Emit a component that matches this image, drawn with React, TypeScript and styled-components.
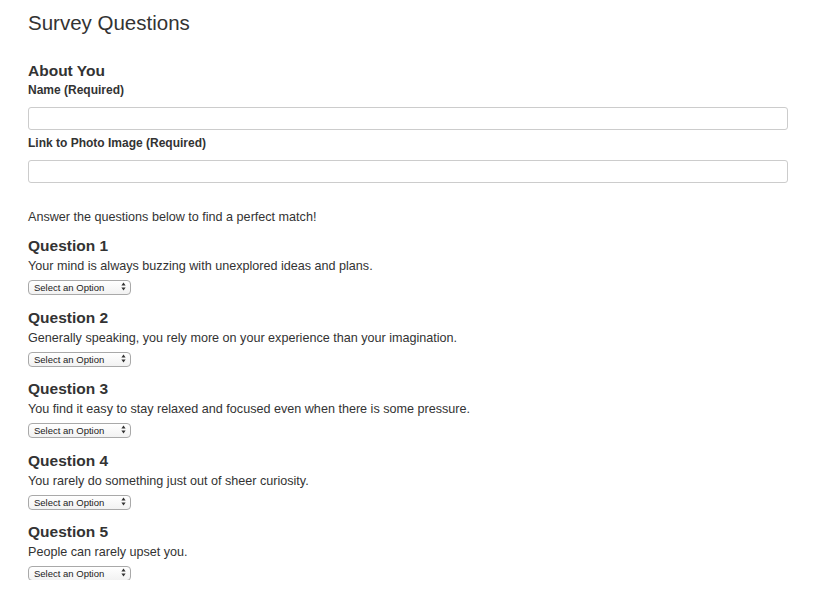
import * as React from 'react';
import styled, { createGlobalStyle } from 'styled-components';

const GlobalStyle = createGlobalStyle`
  html, body {
    margin: 0;
    padding: 0;
    background: #fff;
  }
  body {
    font-family: 'Liberation Sans', Arial, Helvetica, sans-serif;
    font-size: 12px;
    line-height: 17px;
    color: #333;
  }
  * {
    box-sizing: border-box;
  }
`;

const Container = styled.div`
  padding: 0 25px 0 28px;
`;

const Title = styled.h3`
  margin: 12px 0 0;
  font-size: 20.5px;
  font-weight: 500;
  line-height: 1.1;
`;

const SectionTitle = styled.h4<{ $top: number }>`
  margin: ${(p) => p.$top}px 0 0;
  font-size: 15.5px;
  font-weight: 700;
  line-height: 17px;
`;

const Label = styled.label<{ $top: number }>`
  display: block;
  margin-top: ${(p) => p.$top}px;
  font-weight: 700;
  font-size: 12px;
`;

const TextInput = styled.input`
  display: block;
  width: 100%;
  height: 23px;
  margin-top: 8px;
  padding: 0 8px;
  border: 1px solid #ccc;
  border-radius: 3px;
  font: inherit;
  color: #555;
  outline: none;
`;

const Intro = styled.p`
  margin: 26px 0 0;
  font-size: 12.6px;
`;

const Question = styled.div`
  display: flex;
  flex-direction: column;
  align-items: flex-start;
  margin-top: 11px;

  & + & {
    margin-top: 14.5px;
  }
`;

const QuestionText = styled.p`
  margin: 4px 0 0;
  font-size: 12.6px;
`;

const SelectWrap = styled.div`
  position: relative;
  margin-top: 4px;
  width: 103px;
  height: 15px;
`;

const Select = styled.select`
  appearance: none;
  -webkit-appearance: none;
  width: 100%;
  height: 100%;
  margin: 0;
  padding: 0 0 0 5px;
  border: 1px solid #a9a9a9;
  border-radius: 4px;
  background: linear-gradient(#ffffff, #f2f2f2);
  font-family: 'Liberation Sans', Arial, sans-serif;
  font-size: 9.5px;
  line-height: 13px;
  color: #222;
  outline: none;
`;

const Arrows = styled.svg`
  position: absolute;
  right: 5px;
  top: 3px;
  pointer-events: none;
`;

const questions = [
  'Your mind is always buzzing with unexplored ideas and plans.',
  'Generally speaking, you rely more on your experience than your imagination.',
  'You find it easy to stay relaxed and focused even when there is some pressure.',
  'You rarely do something just out of sheer curiosity.',
  'People can rarely upset you.',
];

function OptionSelect() {
  return (
    <SelectWrap>
      <Select defaultValue=''>
        <option value=''>Select an Option</option>
        <option value='1'>1 (Strongly Disagree)</option>
        <option value='2'>2</option>
        <option value='3'>3</option>
        <option value='4'>4</option>
        <option value='5'>5 (Strongly Agree)</option>
      </Select>
      <Arrows width='5' height='9' viewBox='0 0 5 9'>
        <path d='M2.5 0.5 L4.6 3.4 L0.4 3.4 Z' fill='#333' />
        <path d='M2.5 8.5 L4.6 5.6 L0.4 5.6 Z' fill='#333' />
      </Arrows>
    </SelectWrap>
  );
}

export default function App() {
  return (
    <>
      <GlobalStyle />
      <Container>
        <Title>Survey Questions</Title>
        <SectionTitle $top={27.5}>About You</SectionTitle>
        <Label $top={3}>Name (Required)</Label>
        <TextInput type='text' />
        <Label $top={5}>Link to Photo Image (Required)</Label>
        <TextInput type='text' />
        <Intro>Answer the questions below to find a perfect match!</Intro>
        {questions.map((q, idx) => (
          <Question key={idx}>
            <SectionTitle $top={0}>Question {idx + 1}</SectionTitle>
            <QuestionText>{q}</QuestionText>
            <OptionSelect />
          </Question>
        ))}
      </Container>
    </>
  );
}
